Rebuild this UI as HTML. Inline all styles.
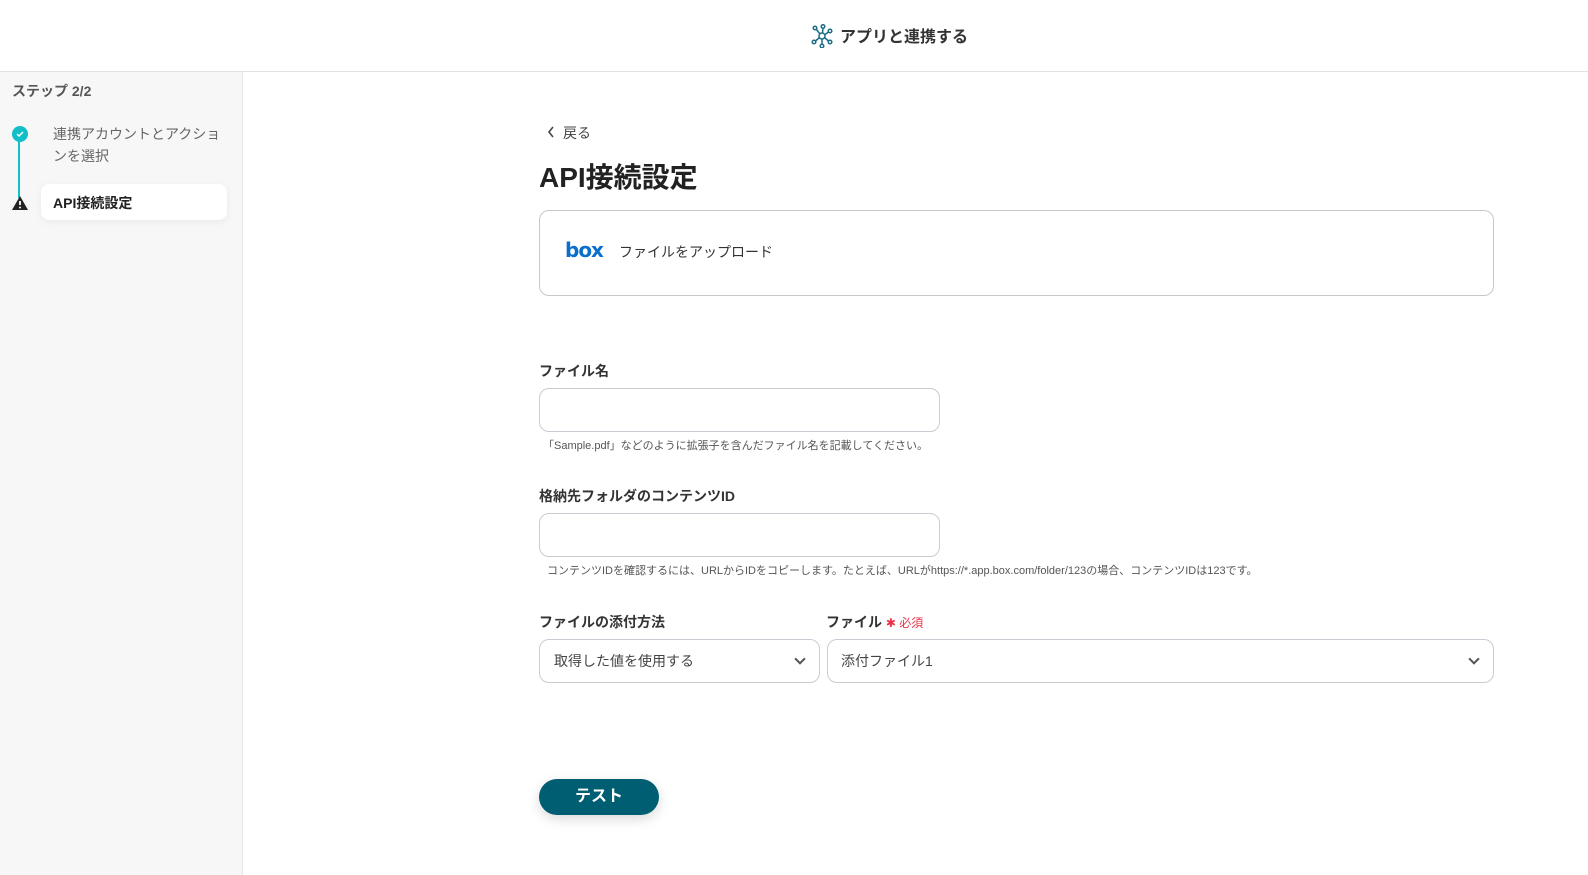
<!DOCTYPE html>
<html><head><meta charset="utf-8"><style>
*{box-sizing:border-box;margin:0;padding:0}
body{width:1588px;height:875px;overflow:hidden;background:#fff;font-family:"Liberation Sans","Noto Sans CJK JP",sans-serif;color:#2b2b2b;position:relative}
.hdr{position:absolute;left:0;top:0;width:1588px;height:72px;border-bottom:1px solid #e2e2e2;background:#fff}
.hdr .t{position:absolute;left:840px;top:23px;font-size:16px;font-weight:bold;color:#333}
.side{position:absolute;left:0;top:72px;width:243px;height:803px;background:#f7f7f7;border-right:1px solid #e6e6e6}
.abs{position:absolute}
.lbl{font-size:14px;font-weight:bold;color:#333}
.inp{position:absolute;border:1px solid #c9ccd2;border-radius:10px;background:#fff}
.hint{position:absolute;font-size:11px;color:#555}
.chev{position:absolute;width:8px;height:8px;border-right:2px solid #555;border-bottom:2px solid #555;transform:rotate(45deg)}
</style></head><body>
<div class="hdr">
<svg class="abs" style="left:811px;top:24px" width="22" height="24" viewBox="0 0 22 24" fill="none" stroke="#1c6d84" stroke-width="1.5"><circle cx="11" cy="12" r="3"/><circle cx="4" cy="4" r="1.8"/><circle cx="12" cy="2.5" r="1.8"/><circle cx="19" cy="7" r="1.8"/><circle cx="19" cy="18" r="1.8"/><circle cx="11" cy="22" r="1.8"/><circle cx="3" cy="18" r="1.8"/><path d="M9 10L5 5M11.5 9L12 4M13.5 11L17.5 8M13.5 13.5L17.5 17M11 15L11 20M8.5 13.5L4.5 17"/></svg>
<div class="t">アプリと連携する</div>
</div>
<div class="side">
<div class="abs" style="left:12px;top:9px;font-size:14px;font-weight:bold;color:#555">ステップ 2/2</div>
<div class="abs" style="left:18px;top:63px;width:2px;height:63px;background:#12c1c6"></div>
<div class="abs" style="left:12px;top:54px;width:16px;height:16px;border-radius:50%;background:#12bfc8"></div>
<svg class="abs" style="left:15px;top:57px" width="10" height="10" viewBox="0 0 10 10"><path d="M2 5l2 2 4-4" stroke="#fff" stroke-width="1.5" fill="none"/></svg>
<div class="abs" style="left:53px;top:51px;width:168px;font-size:14px;line-height:22px;color:#666">連携アカウントとアクションを選択</div>
<svg class="abs" style="left:11px;top:123px" width="18" height="16" viewBox="0 0 18 16"><path d="M9 1L17 15H1z" fill="#222"/><path d="M9 6v4" stroke="#fff" stroke-width="1.8"/><circle cx="9" cy="12.5" r="1" fill="#fff"/></svg>
<div class="abs" style="left:41px;top:112px;width:186px;height:36px;background:#fff;border-radius:8px;box-shadow:0 2px 8px rgba(0,0,0,.06)"></div>
<div class="abs" style="left:53px;top:121px;font-size:14px;font-weight:bold;color:#222">API接続設定</div>
</div>
<svg class="abs" style="left:547px;top:126px" width="8" height="12" viewBox="0 0 8 12"><path d="M6 1L2 6l4 5" stroke="#444" stroke-width="1.6" fill="none"/></svg>
<div class="abs" style="left:563px;top:123px;font-size:14px;color:#444">戻る</div>
<div class="abs" style="left:539px;top:156px;font-size:28px;font-weight:bold;color:#222">API接続設定</div>
<div class="inp" style="left:539px;top:210px;width:955px;height:86px;border-color:#c8c8c8"></div>
<div class="abs" style="left:565px;top:238px;font-size:20px;color:#0a6fcc;letter-spacing:-1px;font-family:'DejaVu Sans',sans-serif;font-weight:bold">box</div>
<div class="abs" style="left:619px;top:242px;font-size:14px;color:#333">ファイルをアップロード</div>
<div class="abs lbl" style="left:539px;top:361px">ファイル名</div>
<div class="inp" style="left:539px;top:388px;width:401px;height:44px"></div>
<div class="hint" style="left:543px;top:437px">「Sample.pdf」などのように拡張子を含んだファイル名を記載してください。</div>
<div class="abs lbl" style="left:539px;top:486px">格納先フォルダのコンテンツID</div>
<div class="inp" style="left:539px;top:513px;width:401px;height:44px"></div>
<div class="hint" style="left:547px;top:562px">コンテンツIDを確認するには、URLからIDをコピーします。たとえば、URLがhttps://*.app.box.com/folder/123の場合、コンテンツIDは123です。</div>
<div class="abs lbl" style="left:539px;top:612px">ファイルの添付方法</div>
<div class="abs lbl" style="left:826px;top:612px">ファイル <span style="color:#e8334a;font-size:12px;font-weight:normal">✱ 必須</span></div>
<div class="inp" style="left:539px;top:639px;width:281px;height:44px"></div>
<div class="abs" style="left:554px;top:651px;font-size:14px;color:#444">取得した値を使用する</div>
<div class="chev" style="left:796px;top:655px"></div>
<div class="inp" style="left:827px;top:639px;width:667px;height:44px"></div>
<div class="abs" style="left:841px;top:651px;font-size:14px;color:#444">添付ファイル1</div>
<div class="chev" style="left:1470px;top:655px"></div>
<div class="abs" style="left:539px;top:779px;width:120px;height:36px;border-radius:18px;background:#005e72;box-shadow:0 4px 12px rgba(0,0,0,.15);color:#fff;font-size:16px;font-weight:bold;text-align:center;line-height:36px">テスト</div>
</body></html>
